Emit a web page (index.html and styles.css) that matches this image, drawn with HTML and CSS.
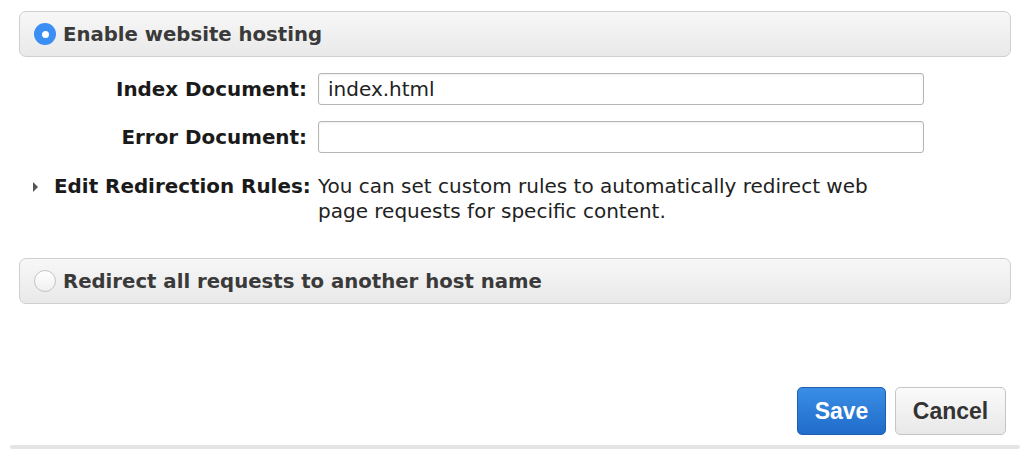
FILE: index.html
```html
<!DOCTYPE html>
<html>
<head>
<meta charset="utf-8">
<link rel="stylesheet" href="styles.css">
</head>
<body>
<div class="page">
  <div class="panel">
    <span class="radio on"><span class="dot"></span></span>
    <span class="panel-title">Enable website hosting</span>
  </div>
  <div class="form">
    <div class="row">
      <label class="label">Index Document:</label>
      <div class="input">index.html</div>
    </div>
    <div class="row">
      <label class="label">Error Document:</label>
      <div class="input"></div>
    </div>
    <div class="row rules">
      <label class="label"><span class="tri"></span>Edit Redirection Rules:</label>
      <div class="desc">You can set custom rules to automatically redirect web<br>page requests for specific content.</div>
    </div>
  </div>
  <div class="panel second">
    <span class="radio"></span>
    <span class="panel-title">Redirect all requests to another host name</span>
  </div>
  <div class="actions">
    <button class="btn save">Save</button>
    <button class="btn cancel">Cancel</button>
  </div>
  <div class="bottom-line"></div>
</div>
</body>
</html>
```
FILE: styles.css
```css
html, body {
  margin: 0;
  padding: 0;
  background: #fff;
}
.page {
  width: 1024px;
  height: 451px;
  padding-top: 11px;
  box-sizing: border-box;
  font-family: "DejaVu Sans", Verdana, sans-serif;
  color: #222;
}
.panel {
  margin-left: 19px;
  width: 992px;
  height: 46px;
  box-sizing: border-box;
  border: 1px solid #cfcfcf;
  border-radius: 7px;
  background: linear-gradient(#f7f7f7, #e9e9e9);
  display: flex;
  align-items: center;
  padding-left: 14px;
}
.panel-title {
  font-weight: bold;
  font-size: 19.7px;
  color: #3a3a3a;
  margin-left: 7px;
}
.radio {
  width: 22px;
  height: 22px;
  border-radius: 50%;
  box-sizing: border-box;
  border: 1px solid #c4c4c4;
  background: linear-gradient(#ffffff, #f0f0f0);
  display: flex;
  align-items: center;
  justify-content: center;
}
.radio.on {
  border: none;
  background: #3b8ef4;
}
.radio .dot {
  width: 7px;
  height: 7px;
  border-radius: 50%;
  background: #fff;
}
.form {
  padding-top: 16px;
  display: flex;
  flex-direction: column;
  gap: 16px;
}
.row {
  display: flex;
  align-items: center;
}
.label {
  width: 307px;
  text-align: right;
  font-weight: bold;
  font-size: 19.9px;
  color: #1a1a1a;
  flex-shrink: 0;
  display: flex;
  justify-content: flex-end;
  align-items: center;
}
.input {
  margin-left: 11px;
  width: 606px;
  height: 32px;
  box-sizing: border-box;
  border: 1px solid #b5b5b5;
  border-radius: 3px;
  box-shadow: inset 0 1px 2px rgba(0,0,0,0.08);
  font-size: 20px;
  color: #222;
  padding-left: 9px;
  display: flex;
  align-items: center;
}
.rules {
  align-items: flex-start;
  margin-top: 5px;
}
.rules .label {
  justify-content: flex-start;
  padding-left: 33px;
  box-sizing: border-box;
  line-height: 25px;
  white-space: nowrap;
}
.tri {
  width: 0;
  height: 0;
  border-top: 5px solid transparent;
  border-bottom: 5px solid transparent;
  border-left: 5px solid #555;
  margin-right: 16px;
}
.desc {
  margin-left: 11px;
  font-size: 20px;
  line-height: 25px;
  color: #222;
}
.second {
  margin-top: 34px;
}
.actions {
  display: flex;
  justify-content: flex-end;
  gap: 9px;
  padding-right: 18px;
  margin-top: 83px;
}
.btn {
  height: 48px;
  border-radius: 5px;
  font-family: "Liberation Sans", Arial, sans-serif;
  font-weight: bold;
  font-size: 23px;
  padding: 0;
  cursor: pointer;
}
.save {
  width: 89px;
  color: #fff;
  border: 1px solid #1f5fae;
  background: linear-gradient(#3a8ee6, #1f6cc9);
}
.cancel {
  width: 111px;
  color: #333;
  border: 1px solid #c5c5c5;
  background: linear-gradient(#fafafa, #e8e8e8);
}
.bottom-line {
  margin: 10px 4px 0 10px;
  height: 4px;
  background: #e4e4e4;
  border-radius: 2px;
}
```
